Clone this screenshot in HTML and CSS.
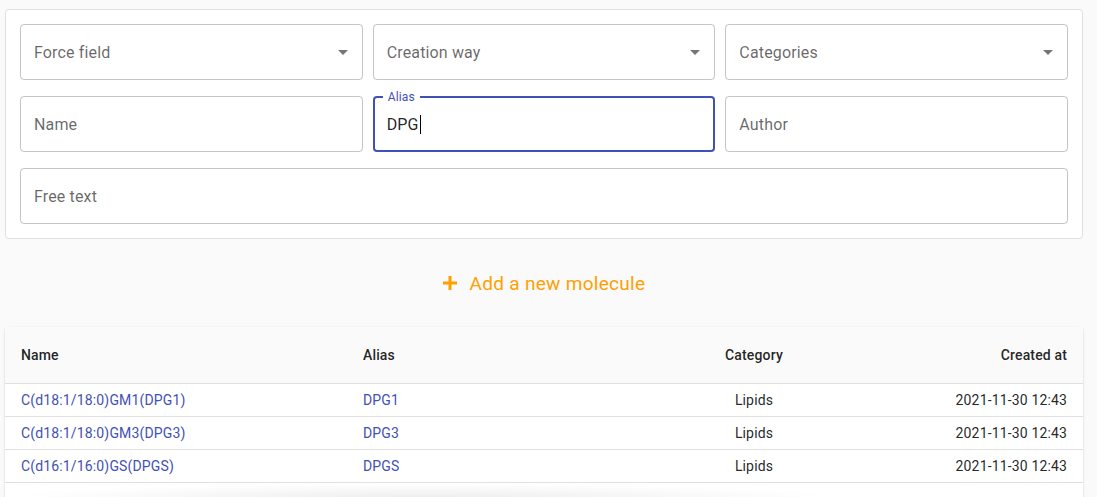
FILE: index.html
```html
<!DOCTYPE html>
<html lang="en">
<head>
<meta charset="utf-8">
<title>Molecules</title>
<link rel="stylesheet" href="styles.css">
</head>
<body>
<div class="page">
  <section class="filters">
    <div class="field select"><span class="placeholder">Force field</span><span class="arrow"></span></div>
    <div class="field select"><span class="placeholder">Creation way</span><span class="arrow"></span></div>
    <div class="field select"><span class="placeholder">Categories</span><span class="arrow"></span></div>
    <div class="field"><span class="placeholder">Name</span></div>
    <div class="field focused"><span class="float-label">Alias</span><span class="value">DPG</span><span class="caret"></span></div>
    <div class="field"><span class="placeholder">Author</span></div>
    <div class="field wide"><span class="placeholder">Free text</span></div>
  </section>

  <div class="add-row">
    <button class="add-btn" type="button">
      <svg class="plus" width="14" height="14" viewBox="0 0 14 14"><rect x="5.5" y="0" width="3" height="14" fill="#ffa000"/><rect x="0" y="5.5" width="14" height="3" fill="#ffa000"/></svg>
      <span>Add a new molecule</span>
    </button>
  </div>

  <section class="table-paper">
    <table class="mol-table">
      <colgroup>
        <col class="c-name"><col class="c-alias"><col class="c-cat"><col>
      </colgroup>
      <thead>
        <tr><th>Name</th><th>Alias</th><th class="center">Category</th><th class="right">Created at</th></tr>
      </thead>
      <tbody>
        <tr><td><a href="#">C(d18:1/18:0)GM1(DPG1)</a></td><td><a href="#">DPG1</a></td><td class="center">Lipids</td><td class="right">2021-11-30 12:43</td></tr>
        <tr><td><a href="#">C(d18:1/18:0)GM3(DPG3)</a></td><td><a href="#">DPG3</a></td><td class="center">Lipids</td><td class="right">2021-11-30 12:43</td></tr>
        <tr><td><a href="#">C(d16:1/16:0)GS(DPGS)</a></td><td><a href="#">DPGS</a></td><td class="center">Lipids</td><td class="right">2021-11-30 12:43</td></tr>
      </tbody>
    </table>
    <div class="table-foot"></div>
  </section>
</div>
</body>
</html>
```

FILE: styles.css
```css
* { box-sizing: border-box; }
html, body { margin: 0; padding: 0; }
body {
  background: #fafafa;
  font-family: Roboto, "Liberation Sans", Arial, sans-serif;
  color: rgba(0,0,0,0.87);
  overflow: hidden;
}
.page {
  padding: 9px 14px 0 5px;
}
.filters {
  background: #fff;
  border: 1px solid #e0e0e0;
  border-radius: 4px;
  padding: 14px;
  display: grid;
  grid-template-columns: repeat(3, 1fr);
  column-gap: 10px;
  row-gap: 16px;
}
.field {
  position: relative;
  height: 56px;
  border: 1px solid rgba(0,0,0,0.23);
  border-radius: 4px;
  display: flex;
  align-items: center;
  padding: 0 13px;
  font-size: 16px;
  letter-spacing: 0.15px;
}
.field.wide { grid-column: 1 / -1; }
.placeholder { color: rgba(0,0,0,0.6); }
.select { justify-content: space-between; }
.arrow {
  width: 0; height: 0;
  border-left: 5px solid transparent;
  border-right: 5px solid transparent;
  border-top: 5px solid rgba(0,0,0,0.54);
  margin-right: 1px;
}
.field.focused {
  border: 2px solid #3f51b5;
  padding: 0 12px;
}
.float-label {
  position: absolute;
  top: -8px;
  left: 8px;
  padding: 0 5px;
  background: #fff;
  color: #3f51b5;
  font-size: 12px;
  line-height: 14px;
}
.value { color: rgba(0,0,0,0.87); }
.caret {
  display: inline-block;
  width: 1px;
  height: 19px;
  background: #000;
  margin-left: 1px;
}
.add-row {
  height: 88px;
  display: flex;
  align-items: center;
  justify-content: center;
}
.add-btn {
  display: flex;
  align-items: center;
  gap: 13px;
  background: none;
  border: 0;
  padding: 6px 8px;
  font-family: inherit;
  font-size: 19px;
  color: #ffa000;
  letter-spacing: 0.3px;
  cursor: pointer;
}
.plus { display: block; }
.table-paper {
  background: #fff;
  border-radius: 4px 4px 0 0;
  box-shadow: 0 2px 1px -1px rgba(0,0,0,0.2), 0 1px 1px 0 rgba(0,0,0,0.14), 0 1px 3px 0 rgba(0,0,0,0.12);
  overflow: hidden;
}
.mol-table {
  width: 100%;
  border-collapse: collapse;
  table-layout: fixed;
  font-size: 14px;
  letter-spacing: 0.15px;
}
.c-name { width: 342px; }
.c-alias { width: 342px; }
.c-cat { width: 130px; }
.mol-table th {
  height: 56px;
  background: #fafafa;
  font-weight: 500;
  text-align: left;
  padding: 0 16px;
  border-bottom: 1px solid #e0e0e0;
  color: rgba(0,0,0,0.87);
}
.mol-table td {
  height: 33px;
  padding: 0 16px;
  line-height: 20px;
  border-bottom: 1px solid #e0e0e0;
  white-space: nowrap;
}
.mol-table .center { text-align: center; }
.mol-table .right { text-align: right; }
.mol-table a {
  color: #3f51b5;
  text-decoration: none;
}
.table-foot {
  height: 15px;
  background: radial-gradient(ellipse 420px 14px at 420px 100%, rgba(0,0,0,0.07), rgba(0,0,0,0));
}
```
